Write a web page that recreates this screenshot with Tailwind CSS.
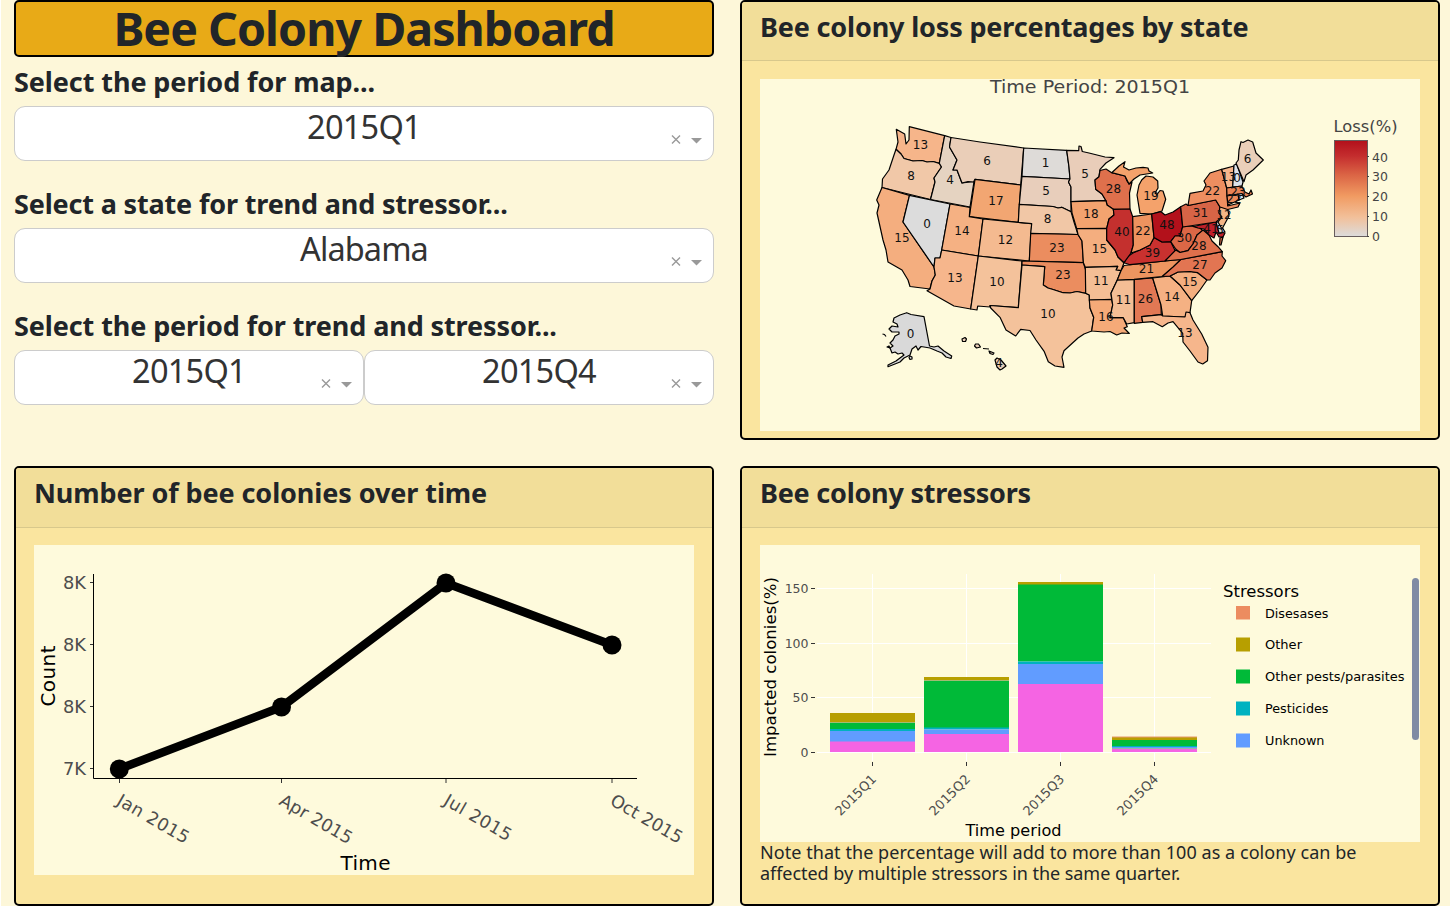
<!DOCTYPE html>
<html lang="en">
<head>
<meta charset="utf-8">
<title>Bee Colony Dashboard</title>
<script src="https://cdn.jsdelivr.net/npm/@tailwindcss/browser@4"></script>
</head>
<body class="bg-white overflow-hidden font-['Noto_Sans',sans-serif] text-[#212529]">
<main class="ml-px h-[906px] w-[1449px] bg-[#fdf7d9] pl-[13px] grid grid-cols-[700px_700px] gap-x-[26px] grid-rows-[440px_440px] gap-y-[26px]">

  <section>
    <h1 class="h-[57px] rounded-[5px] border-2 border-black bg-[#e8aa17] text-center text-[46.500px] leading-[53px] font-bold whitespace-nowrap"><span class="tracking-[-0.95px]">Bee Colony Dashboard</span></h1>
    <h3 class="mt-[7px] h-[42px] text-[27px] leading-[36px] font-bold whitespace-nowrap tracking-[-0.08px]">Select the period for map...</h3>
    <div class="relative h-[55px] rounded-[11px] border border-[#ccc] bg-white text-center text-[32.500px] leading-[40px] text-[#333]"><span class="tracking-[-0.75px]">2015Q1</span>
      <svg class="absolute right-[9px] top-[26px]" width="34" height="14" viewBox="0 0 34 14"><path d="M2 2.500l8 8M10 2.500l-8 8" stroke="#999" stroke-width="1.4"/><path d="M21 5h11l-5.500 5.500z" fill="#999"/></svg></div>
    <h3 class="mt-[25px] h-[42px] text-[27px] leading-[36px] font-bold whitespace-nowrap tracking-[-0.16px]">Select a state for trend and stressor...</h3>
    <div class="relative h-[55px] rounded-[11px] border border-[#ccc] bg-white text-center text-[32.500px] leading-[40px] text-[#333]"><span class="tracking-[-0.9px]">Alabama</span>
      <svg class="absolute right-[9px] top-[26px]" width="34" height="14" viewBox="0 0 34 14"><path d="M2 2.500l8 8M10 2.500l-8 8" stroke="#999" stroke-width="1.4"/><path d="M21 5h11l-5.500 5.500z" fill="#999"/></svg></div>
    <h3 class="mt-[25px] h-[42px] text-[27px] leading-[36px] font-bold whitespace-nowrap tracking-[-0.1px]">Select the period for trend and stressor...</h3>
    <div class="grid grid-cols-2">
      <div class="relative h-[55px] rounded-[11px] border border-[#ccc] bg-white text-center text-[32.500px] leading-[40px] text-[#333]"><span class="tracking-[-0.75px]">2015Q1</span>
        <svg class="absolute right-[9px] top-[26px]" width="34" height="14" viewBox="0 0 34 14"><path d="M2 2.500l8 8M10 2.500l-8 8" stroke="#999" stroke-width="1.4"/><path d="M21 5h11l-5.500 5.500z" fill="#999"/></svg></div>
      <div class="relative h-[55px] rounded-[11px] border border-[#ccc] bg-white text-center text-[32.500px] leading-[40px] text-[#333]"><span class="tracking-[-0.75px]">2015Q4</span>
        <svg class="absolute right-[9px] top-[26px]" width="34" height="14" viewBox="0 0 34 14"><path d="M2 2.500l8 8M10 2.500l-8 8" stroke="#999" stroke-width="1.4"/><path d="M21 5h11l-5.500 5.500z" fill="#999"/></svg></div>
    </div>
  </section>

  <section class="overflow-hidden rounded-[5px] border-2 border-black bg-[#fae59f]">
    <h2 class="h-[59px] border-b border-[#d8c88c] bg-[#f2de99] pl-[18px] text-[27px] leading-[50px] font-bold whitespace-nowrap tracking-[-0.16px]">Bee colony loss percentages by state</h2>
    <svg class="ml-[18px] mt-[18px] block bg-[#fefadc] font-['DejaVu_Sans',sans-serif]" width="660" height="352" viewBox="760 79 660 352">
      <text x="990" y="93" font-size="18.500" fill="#444" textLength="200" lengthAdjust="spacingAndGlyphs">Time Period: 2015Q1</text>
      <g stroke="#000" stroke-width="1.2" stroke-linejoin="round">
        <path fill="#f6b58a" d="M909.300 126.700L944.700 135.700 939.300 163.300 933 161.500 927 162 922 160.500 913 161 904 158.500 901 154 896 149.300 898 142 896.300 129.300 904.700 134 906 144 909 140z"/>
        <path fill="#f1c8a8" d="M896 149.300L901 154 904 158.500 913 161 922 160.500 927 162 933 161.500 939.300 163.300 941.500 167 934 178 935 182 930.500 199.500 882 187.500 882.500 179 889 170 894 155z"/>
        <path fill="#e5d3c1" d="M944.700 135.700L951 137.500 949.500 147 957 160 953 170 957 170 962 183 974 181.500 970 207 930.500 199.500 935 182 934 178 941.500 167 939.300 163.300z"/>
        <path fill="#eaceb8" d="M951 137.500L980 142 1023.700 148 1020.700 185 975 179.300 973.500 182 968 181.500 962 183 957 170 953 170 957 160 949.500 147z"/>
        <path fill="#f2a672" d="M975 179.300L1020.700 185 1018.300 222.300 969.300 216.700z"/>
        <path fill="#f4ae7f" d="M882 187.500L909.500 195.300 903 222 934 267 935.300 275 932 281 930 289 910 286.500 908 280 902 270 888 262 886 250 883 240 877 213 879 205 876.700 200z"/>
        <path fill="#dcdcdc" d="M909.500 195.300L950 204 941.700 250 940 258 935 258 934 267 903 222z"/>
        <path fill="#f5b183" d="M950 204L970 207.500 969.300 216.700 983 219 978.300 256 941.700 250z"/>
        <path fill="#f6b68c" d="M941.700 250L978.300 256 970.700 309 954 306 927 290.700 930 289 932 281 935.300 275 934 267 935 258 940 258z"/>
        <path fill="#f4ba90" d="M983 219L1031.700 223.700 1029.300 261 978.300 256z"/>
        <path fill="#f4c29b" d="M978.300 256L1022 261 1018.300 307.700 990 305.500 990 307 977.700 306 977 310 970.700 309z"/>
        <path fill="#dedbd8" d="M1023.700 148L1066.700 150.300 1069 167 1070 179 1022 176.300z"/>
        <path fill="#e8cebb" d="M1022 176.300L1070 179 1068.500 182 1071 187 1071 211.700 1061.700 207.300 1058 208 1053 206.500 1019.300 204.300z"/>
        <path fill="#f1c7a6" d="M1019.300 204.300L1053 206.500 1058 208 1061.700 207.300 1071 211.700 1074 222 1078 234.500 1030.700 233.300 1031.700 223.700 1018.300 222.300z"/>
        <path fill="#eb8d5f" d="M1030.700 233.300L1078 234.500 1082 241 1083.400 262.700 1029.300 261z"/>
        <path fill="#eb8d5f" d="M1022 261L1083.400 262.700 1085.700 270 1085.700 293.300 1077 291.500 1070 293 1063 292.700 1053 289.500 1048 288 1043.300 285 1044.700 266.700 1022 265z"/>
        <path fill="#f4c29b" d="M1022 265L1044.700 266.700 1043.300 285 1048 288 1053 289.500 1063 292.700 1070 293 1077 291.500 1085.700 293.300 1089.300 295 1090 308 1093.700 317.300 1091.700 331 1084 334 1078 338 1064 350.700 1062 357 1064 367.300 1055 366 1048.300 361.700 1044.300 351.700 1036 340 1030 330.500 1020.700 329.300 1015.700 336 1006 330 1000 317.300 990.700 308 990 305.500 1018.300 307.700z"/>
        <path fill="#e9cdb9" d="M1066.700 150.300L1078.700 150.700 1079 146 1081 146.500 1082.300 151.500 1089 153 1097 155 1105 157 1114 157.700 1106 163 1100 169.300 1099 176.700 1095 180 1095.700 189.300 1102 194 1106 200.700 1071 201.700 1071 187 1068.500 182 1070 179 1069 167z"/>
        <path fill="#df704c" d="M1100 170.500L1106 169 1111.700 172.700 1125 176 1127 181 1129 184 1132 182 1129.500 193 1130 209 1113.300 209.300 1107 205 1106 200.700 1102 194 1095.700 189.300 1095 180 1099 176.700z"/>
        <path fill="#f4a26b" d="M1111.700 172.700L1119 166 1125 161.700 1123.500 167 1129 170 1136 168 1143 167.300 1148 168 1149 171 1152.700 173 1140 175 1134 179 1129 184 1125 176z"/>
        <path fill="#f4a26b" d="M1140 213.300L1137 195 1139 185 1141.700 180 1146 176 1153 177 1157.700 181 1158 188 1155 193 1157 194.500 1160 190.500 1163 191 1165.700 199.300 1162 211 1151.700 214z"/>
        <path fill="#f3a36f" d="M1071 201.700L1106 200.700 1107 205 1113.300 209.300 1114 215 1109 219 1106.700 228.300 1076.700 228.700 1072 213z"/>
        <path fill="#f4ae7f" d="M1076.700 228.700L1106.700 228.300 1106.700 240 1115 250 1118 257 1124 262.700 1121 270.700 1116 270 1117.700 266.300 1085.300 267.300 1083.400 262.700 1082 241 1078 234.500z"/>
        <path fill="#f4be95" d="M1085.300 267.300L1117.700 266.300 1116 270 1121 270.700 1117.300 280 1111 293.300 1111.700 299.300 1089.300 300 1089.300 295 1085.700 293.300z"/>
        <path fill="#f5aa78" d="M1089.300 300L1111.700 299.300 1112.700 305 1110 317.700 1123.300 317.700 1127.300 326.700 1124 328 1129.300 333.500 1122 333 1116.700 335 1110 331.500 1104 332 1091.700 331 1093.700 317.300 1090 308z"/>
        <path fill="#f4be95" d="M1117.300 280L1134.300 279.300 1134.300 322.700 1126.700 324 1123.300 317.700 1110 317.700 1112.700 305 1111 293.300z"/>
        <path fill="#e27854" d="M1134.300 279.300L1152.700 278 1161 305 1161.300 314.700 1141.700 316.700 1142.700 322.300 1134.300 323.300z"/>
        <path fill="#f5b183" d="M1152.700 278L1170 276 1180 285 1191.700 300.700 1190 312.700 1185 317 1162.700 316 1161 305z"/>
        <path fill="#f6b68c" d="M1141.700 316.700L1161.300 314.700 1162.700 316 1185 317 1186 312 1190 312.700 1193 320 1201.700 334 1208 347.300 1207.500 360.700 1202.700 364 1198 362 1190 351 1183 342 1182.700 333.300 1173 321.700 1168 323 1162.300 326.700 1153 321.700 1142.700 322.300z"/>
        <path fill="#f4ae7f" d="M1170 276L1178 272 1190 271.500 1197.700 272.700 1207 280 1200 290 1191.700 300.700 1180 285z"/>
        <path fill="#e27552" d="M1180.700 259.500L1222.300 251.700 1222 256 1225.700 260.700 1222 268 1215 273 1210 280 1207 280 1197.700 272.700 1190 271.500 1178 272 1170 276 1162 276.500z"/>
        <path fill="#ed9560" d="M1124 265.500L1165 261 1180.700 259.500 1173 267 1162 276.500 1134 279.300 1117.300 280 1121 270.700z"/>
        <path fill="#c9312f" d="M1124 262.700L1127 257 1133 253 1140 250 1150 245 1154 237.500 1162 242 1170.700 241.700 1175.700 251.700 1165 261 1130 264.700z"/>
        <path fill="#c4302e" d="M1113.300 209.300L1130 209 1132.700 216.700 1133.300 245 1131 253 1124 262.700 1118 257 1115 250 1106.700 240 1106.700 228.300 1109 219 1114 215z"/>
        <path fill="#ee935f" d="M1132.700 216.700L1151.700 214 1154 237.500 1150 245 1140 250 1131 253 1133.300 245z"/>
        <path fill="#b3111b" d="M1151.700 214L1161 211.700 1165 215 1173 212 1180.700 206.700 1182.700 226.700 1180 236 1175 236 1170.700 241.700 1162 242 1154 237.500z"/>
        <path fill="#dc6746" d="M1182.700 226.700L1193 226 1200 228 1203 231 1197 235 1193 244 1188 250.700 1180 252.500 1175.700 249 1170.700 241.700 1175 236 1180 236z"/>
        <path fill="#df704c" d="M1165 261L1175.700 250 1180 252.500 1188 250.700 1193 244 1197 235 1203 230 1209 235 1212 241 1218 246.700 1222.300 251.700 1180.700 259.500z"/>
        <path fill="#c0202a" d="M1193 226.500L1216 222 1219 232 1225 233 1223 237 1219 237 1216 232 1214 238 1209 235 1204 229 1198 228z"/>
        <path fill="#df704c" d="M1220 238l3-1-2 8-1.500 0z"/>
        <path fill="#c9d3df" d="M1216 222L1219 222 1225 232 1219 233z"/>
        <path fill="#d76446" d="M1180.700 206.700L1186 204 1188 205.500 1215.700 200 1220 207 1219 213 1222 217 1216 222 1182.700 227z"/>
        <path fill="#f4b585" d="M1220 206.700L1227.700 208.500 1229 216 1222 229 1218 222 1222 217 1219 213z"/>
        <path fill="#ee8e60" d="M1221.700 169.300L1224 178 1226.700 188 1227.700 206 1240 203 1238 207 1227.700 209.500 1220 207 1215.700 200 1188 205.500 1190 193.300 1203 191 1206 185 1204 181 1210 173z"/>
        <path fill="#f6b68c" d="M1221.700 169.300L1234 166 1232.700 187 1226.700 188 1224 178z"/>
        <path fill="#dce2ea" d="M1234 165L1236.700 164 1243 182 1242 186 1232.700 187z"/>
        <path fill="#eacfb9" d="M1236 163L1238.300 160 1239 150 1241 141.700 1243 142.500 1248 140 1252.700 142 1256 153 1263.300 160 1253 170 1246 175 1244 181.700z"/>
        <path fill="#e98457" d="M1226.700 188L1241.700 186 1245 192 1249 194 1251 190 1252.500 194 1246 197 1242 194 1227 196z"/>
        <path fill="#ec8a5b" d="M1227 196L1238 194 1239 200 1228 205z"/>
        <path fill="#dde3e7" d="M1238 194L1242 193.500 1244 198 1239 200z"/>
        <path fill="#d9d9d9" d="M906.700 312.700L911 314.500 924 316.700 929.500 346 934 347 938 346 944 351 951.700 356 951 358.500 946 357 942 353 937 351 930 348 921 346.500 918 350 916 346 912 349 910 355 904 358 900 362 888 366.700 888 365 896 361 904 355 902 353 898 354 895 352 892 353 890 348 893 346 890 343 893 340 895 336 899 334 899 332 892 332 889 329 892 326 898 327 897 324 893 322 894 318 900 315z"/>
        <path fill="#d9d9d9" d="M910 356l2 1 0 2-2 .5-1-2zM882.500 334l2 .5 1.500 2M887 347l2-1 1 2z"/>
        <path fill="#eaceb8" d="M962 339l3-1.500 1.500 1.500-1 2.500-3 0zM975.500 344l3 0 2 3-4 1-2-2zM983 348.500l6 .5M989 351l5 2-1 1.500-3-1zM995 360l2-2 4 2 5 6-4 3-2 1-3-3z"/>
      </g>
      <g font-size="12" fill="#111" text-anchor="middle">
        <text x="920.500" y="149">13</text><text x="911" y="180">8</text><text x="950" y="184">4</text><text x="987" y="165">6</text><text x="996" y="205">17</text><text x="927" y="228">0</text><text x="902" y="242">15</text><text x="962" y="235">14</text><text x="1005.500" y="244">12</text><text x="955" y="282">13</text><text x="997" y="286">10</text><text x="1045.500" y="167">1</text><text x="1046" y="195">5</text><text x="1047.500" y="223">8</text><text x="1057" y="252">23</text><text x="1063" y="279">23</text><text x="1048" y="318">10</text><text x="1085" y="178">5</text><text x="1113.500" y="193">28</text><text x="1091" y="218">18</text><text x="1099.500" y="253">15</text><text x="1101" y="285">11</text><text x="1106" y="321">16</text><text x="1123.500" y="304">11</text><text x="1145.500" y="303">26</text><text x="1172" y="301">14</text><text x="1185" y="337">13</text><text x="1190" y="286">15</text><text x="1200" y="269">27</text><text x="1146.500" y="273">21</text><text x="1152.500" y="257">39</text><text x="1122" y="236">40</text><text x="1143" y="235">22</text><text x="1167" y="229">48</text><text x="1184.500" y="242">30</text><text x="1199" y="250">28</text><text x="1200.500" y="217">31</text><text x="1212.500" y="195">22</text><text x="1151" y="200">19</text><text x="1228.500" y="181">13</text><text x="1237" y="182">0</text><text x="1247.500" y="163">6</text><text x="1238" y="196">23</text><text x="1234" y="203">22</text><text x="1224" y="219">12</text><text x="1211" y="233">41</text><text x="1220" y="234">5</text><text x="910.500" y="338">0</text><text x="999" y="367">4</text>
      </g>
      <defs><linearGradient id="loss" x1="0" y1="0" x2="0" y2="1"><stop offset="0" stop-color="#b2101b"/><stop offset=".16" stop-color="#c42d2e"/><stop offset=".36" stop-color="#db6545"/><stop offset=".58" stop-color="#f19b62"/><stop offset=".8" stop-color="#f2c09a"/><stop offset="1" stop-color="#dcdcdc"/></linearGradient></defs>
      <text x="1333.500" y="132" font-size="15.500" fill="#444" textLength="64" lengthAdjust="spacingAndGlyphs">Loss(%)</text>
      <rect x="1334.500" y="140.500" width="33" height="96" fill="url(#loss)" stroke="#665c5c"/>
      <path d="M1367 156.500h2M1367 176.500h2M1367 196.500h2M1367 216.500h2M1367 236.500h2" stroke="#444"/>
      <g font-size="12.500" fill="#444"><text x="1372" y="162">40</text><text x="1372" y="181">30</text><text x="1372" y="201">20</text><text x="1372" y="221">10</text><text x="1372" y="241">0</text></g>
    </svg>
  </section>

  <section class="overflow-hidden rounded-[5px] border-2 border-black bg-[#fae59f]">
    <h2 class="h-[60px] border-b border-[#d8c88c] bg-[#f2de99] pl-[18px] text-[27px] leading-[50px] font-bold whitespace-nowrap tracking-[-0.09px]">Number of bee colonies over time</h2>
    <svg class="ml-[18px] mt-[17px] block bg-[#fefadc] font-['DejaVu_Sans',sans-serif]" width="660" height="330" viewBox="34 545 660 330">
      <path d="M93.500 574V778.500H637" fill="none" stroke="#000"/>
      <path d="M90 582.500h3M90 644.500h3M90 706.500h3M90 768.500h3M119.500 779v4M281.500 779v4M446 779v4M612 779v4" stroke="#333"/>
      <path d="M119 769L281.500 707 446 583 612 645" fill="none" stroke="#000" stroke-width="8.500"/>
      <circle cx="119.300" cy="769" r="9.500"/><circle cx="281.500" cy="707" r="9.500"/><circle cx="446" cy="583" r="9.500"/><circle cx="612" cy="645" r="9.500"/>
      <g font-size="17.500" fill="#4d4d4d"><text x="63" y="589" textLength="23" lengthAdjust="spacingAndGlyphs">8K</text><text x="63" y="651" textLength="23" lengthAdjust="spacingAndGlyphs">8K</text><text x="63" y="713" textLength="23" lengthAdjust="spacingAndGlyphs">8K</text><text x="63" y="775" textLength="23" lengthAdjust="spacingAndGlyphs">7K</text>
        <text transform="translate(115.500 804) rotate(30)" textLength="80">Jan 2015</text><text transform="translate(278 804) rotate(30)" textLength="81">Apr 2015</text><text transform="translate(442.500 804) rotate(30)" textLength="75">Jul 2015</text><text transform="translate(609 804) rotate(30)" textLength="80">Oct 2015</text></g>
      <text transform="translate(55 706.500) rotate(-90)" font-size="20" textLength="61">Count</text>
      <text x="340.500" y="870" font-size="20" textLength="50">Time</text>
    </svg>
  </section>

  <section class="overflow-hidden rounded-[5px] border-2 border-black bg-[#fae59f]">
    <h2 class="h-[60px] border-b border-[#d8c88c] bg-[#f2de99] pl-[18px] text-[27px] leading-[50px] font-bold whitespace-nowrap tracking-[-0.23px]">Bee colony stressors</h2>
    <svg class="ml-[18px] mt-[17px] block bg-[#fefadc] font-['DejaVu_Sans',sans-serif]" width="660" height="297" viewBox="760 545 660 297">
      <path d="M817 588.500h394M817 643.500h394M817 697.500h394M817 752.500h394M872.500 574v187M966.500 574v187M1060.500 574v187M1154.500 574v187" stroke="#fff"/>
      <path d="M811 588.500h4M811 643.500h4M811 697.500h4M811 752.500h4M872.500 762v4M966.500 762v4M1060.500 762v4M1154.500 762v4" stroke="#333"/>
      <g fill="#b79f00"><path d="M830 713h85v10h-85zM924 677h85v4h-85zM1018 582h85v3h-85zM1112 737h85v3h-85z"/></g>
      <g fill="#00ba38"><path d="M830 723h85v6h-85zM924 681h85v47h-85zM1018 584.500h85v77h-85zM1112 740h85v6h-85z"/></g>
      <g fill="#00b2c0"><path d="M830 729h85v2h-85zM924 727.500h85v2h-85zM1018 661.500h85v3h-85zM1112 746h85v1h-85z"/></g>
      <g fill="#619cff"><path d="M830 731h85v11h-85zM924 729.500h85v5h-85zM1018 664h85v20h-85zM1112 747h85v2h-85z"/></g>
      <g fill="#f564e3"><path d="M830 741.500h85v10.500h-85zM924 734h85v18h-85zM1018 684h85v68h-85zM1112 749h85v3h-85z"/></g>
      <path d="M830 722.500h85M924 680.500h85M1112 748.500h85" stroke="#9cc392" stroke-width=".8"/>
      <path d="M1112 737h85" stroke="#e8986a"/>
      <g font-size="12.500" fill="#4d4d4d" text-anchor="end"><text x="808.500" y="593">150</text><text x="808.500" y="648">100</text><text x="808.500" y="702">50</text><text x="808.500" y="757">0</text>
        <text transform="translate(877 780) rotate(-45)" font-size="13">2015Q1</text><text transform="translate(971 780) rotate(-45)" font-size="13">2015Q2</text><text transform="translate(1065 780) rotate(-45)" font-size="13">2015Q3</text><text transform="translate(1159 780) rotate(-45)" font-size="13">2015Q4</text></g>
      <text transform="translate(776 757) rotate(-90)" font-size="16.500" textLength="180" lengthAdjust="spacingAndGlyphs">Impacted colonies(%)</text>
      <text x="965.500" y="836" font-size="16.500" textLength="96" lengthAdjust="spacingAndGlyphs">Time period</text>
      <text x="1223" y="597" font-size="16.500" textLength="76" lengthAdjust="spacingAndGlyphs">Stressors</text>
      <path fill="#ec8c60" d="M1236 606h14v13.500h-14z"/><path fill="#b79f00" d="M1236 637.500h14v14h-14z"/><path fill="#00ba38" d="M1236 669.500h14v14h-14z"/><path fill="#00b2c0" d="M1236 701.500h14v14h-14z"/><path fill="#619cff" d="M1236 733.500h14v14h-14z"/>
      <g font-size="13"><text x="1265" y="618" textLength="63.500" lengthAdjust="spacingAndGlyphs">Disesases</text><text x="1265" y="649" textLength="37" lengthAdjust="spacingAndGlyphs">Other</text><text x="1265" y="681" textLength="139.500" lengthAdjust="spacingAndGlyphs">Other pests/parasites</text><text x="1265" y="713" textLength="63.500" lengthAdjust="spacingAndGlyphs">Pesticides</text><text x="1265" y="745" textLength="59.500" lengthAdjust="spacingAndGlyphs">Unknown</text></g>
      <rect x="1412" y="578" width="7" height="162" rx="3.500" fill="#808ba4"/>
    </svg>
    <p class="ml-[18px] w-[660px] text-[18px] leading-[21px]"><span class="whitespace-nowrap tracking-[0.06px]">Note that the percentage will add to more than 100 as a colony can be</span><br><span class="whitespace-nowrap tracking-[-0.05px]">affected by multiple stressors in the same quarter.</span></p>
  </section>
</main>
</body>
</html>
